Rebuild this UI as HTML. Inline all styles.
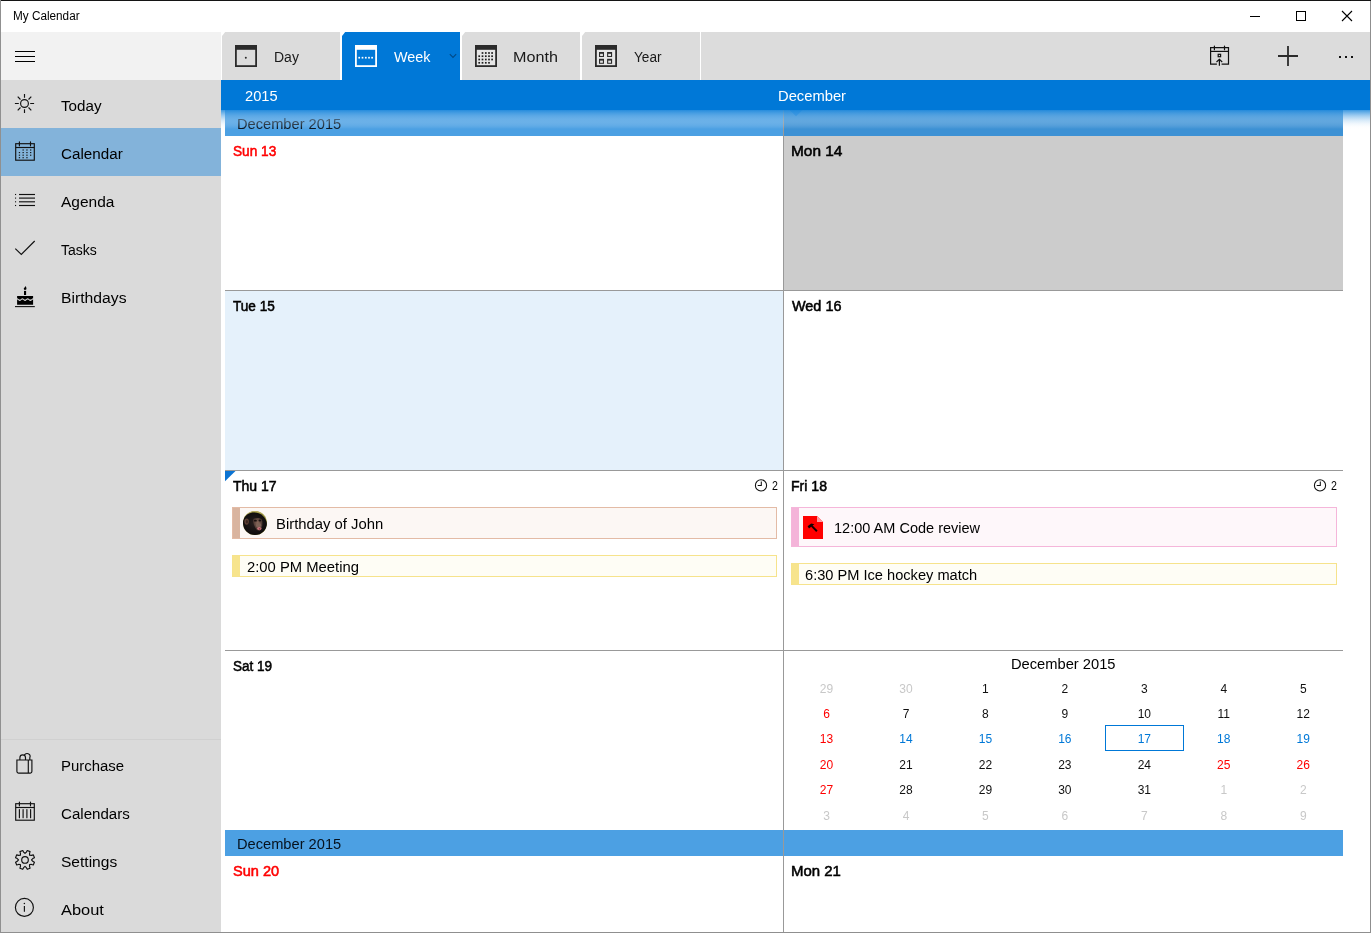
<!DOCTYPE html>
<html lang="en">
<head>
<meta charset="utf-8">
<title>My Calendar</title>
<style>
*{box-sizing:border-box;margin:0;padding:0}
html,body{width:1371px;height:933px;overflow:hidden;background:#fff}
body{font-family:"Liberation Sans",sans-serif;color:#000;position:relative}
.abs{position:absolute}
.t{position:absolute;white-space:nowrap;line-height:18px;transform-origin:0 0;display:block}
#win{position:absolute;left:0;top:0;width:1371px;height:933px;overflow:hidden;background:#fff;will-change:transform}
#bt{left:1px;top:0;width:1370px;height:1px;background:#141414;z-index:50}
#bl{left:0;top:0;width:1px;height:933px;background:#909090;z-index:50}
#br{left:1370px;top:1px;width:1px;height:932px;background:#8f8f8f;z-index:50}
#bb{left:0;top:932px;width:1371px;height:1px;background:#8f8f8f;z-index:50}
#sbhead{left:0;top:32px;width:221px;height:48px;background:#f2f2f2}
#sb{left:0;top:80px;width:221px;height:853px;background:#dadada}
.nav{position:absolute;left:0;width:221px;height:48px}
.nav.sel{background:#83b3da}
.nav svg{position:absolute;left:0;top:0;width:48px;height:48px;overflow:visible}
#sbsep{left:0;top:739px;width:221px;height:1px;background:#d0d0d0}
#tabbar{left:221px;top:32px;width:1150px;height:48px;background:#fff}
.tab{position:absolute;top:32px;width:118px;height:48px;background:#dcdcdc;clip-path:polygon(0 4px,3.2px 0,100% 0,100% 100%,0 100%)}
.tab.sel{background:#0078d7}
.tab svg.ic{position:absolute;left:12px;top:12px;width:24px;height:24px;overflow:visible}
#bluebar{left:221px;top:80px;width:1149px;height:30px;background:#0078d7}
.band{position:absolute;left:225px;width:1118px;height:26px;background:rgba(0,120,215,.7)}
.hl{position:absolute;left:225px;width:1118px;height:1px;background:#999}
.vl{position:absolute;left:783px;width:1px;background:#999}
.ev{position:absolute;border:1px solid;overflow:hidden}
.ev b{position:absolute;left:-1px;top:-1px;bottom:-1px;width:8px}
#mini i{position:absolute;width:79.45px;text-align:center;font-style:normal;font-size:12px;line-height:14px;color:#111}
#mini i.g{color:#c8c8c8}
#mini i.r{color:#f00}
#mini i.b{color:#0078d7}
</style>
</head>
<body>
<div id="win">
<div class="abs" id="bt"></div><div class="abs" id="bl"></div><div class="abs" id="br"></div><div class="abs" id="bb"></div>
<!-- title bar -->
<span class="t" style="left:13.40px;top:6.84px;font-size:12px;transform:scaleX(0.9790)">My Calendar</span>
<svg class="abs" style="left:1240px;top:0;width:131px;height:32px" viewBox="1240 0 131 32">
<path d="M1250 16.5H1260" stroke="#000" stroke-width="1" fill="none"/>
<rect x="1296.5" y="11.5" width="9" height="9" stroke="#000" stroke-width="1" fill="none"/>
<path d="M1342 11L1352 21M1352 11L1342 21" stroke="#000" stroke-width="1.1" fill="none"/>
</svg>
<!-- sidebar -->
<div class="abs" id="sbhead"></div>
<div class="abs" id="sb"></div>
<svg class="abs" style="left:0;top:32px;width:48px;height:48px" viewBox="0 0 48 48"><path d="M15 19.5H35M15 24.5H35M15 29.5H35" stroke="#000" stroke-width="1" fill="none"/></svg>
<div class="nav" style="top:80px"><svg viewBox="0 0 48 48"><circle cx="24.5" cy="23.5" r="3.9" stroke="#111" stroke-width="1.15" fill="none"/><path d="M24.50 17.80L24.50 13.90M28.53 19.47L31.29 16.71M30.20 23.50L34.10 23.50M28.53 27.53L31.29 30.29M24.50 29.20L24.50 33.10M20.47 27.53L17.71 30.29M18.80 23.50L14.90 23.50M20.47 19.47L17.71 16.71" stroke="#111" stroke-width="1.15" fill="none" stroke-width="1.25"/></svg></div>
<span class="t" style="left:61.00px;top:96.91px;font-size:14.7px;transform:scaleX(1.0339)">Today</span>
<div class="nav sel" style="top:128px"><svg viewBox="0 0 48 48"><rect x="15.7" y="15.7" width="18.6" height="16.5" stroke="#111" stroke-width="1.15" fill="none" stroke-width="1.25"/><path d="M15.7 19.5H34.3" stroke="#111" stroke-width="1.15" fill="none"/><path d="M19.4 13.9V17.8M30.5 13.9V17.8" stroke="#111" stroke-width="1.15" fill="none" stroke-width="1.3" stroke-linecap="round"/><rect x="22.5" y="21.45" width="1.3" height="1.1" fill="#111"/><rect x="26.3" y="21.45" width="1.3" height="1.1" fill="#111"/><rect x="30.0" y="21.45" width="1.3" height="1.1" fill="#111"/><rect x="18.8" y="24.05" width="1.3" height="1.1" fill="#111"/><rect x="22.5" y="24.05" width="1.3" height="1.1" fill="#111"/><rect x="26.3" y="24.05" width="1.3" height="1.1" fill="#111"/><rect x="30.0" y="24.05" width="1.3" height="1.1" fill="#111"/><rect x="18.8" y="26.65" width="1.3" height="1.1" fill="#111"/><rect x="22.5" y="26.65" width="1.3" height="1.1" fill="#111"/><rect x="26.3" y="26.65" width="1.3" height="1.1" fill="#111"/><rect x="30.0" y="26.65" width="1.3" height="1.1" fill="#111"/><rect x="18.8" y="29.15" width="1.3" height="1.1" fill="#111"/><rect x="22.5" y="29.15" width="1.3" height="1.1" fill="#111"/><rect x="26.3" y="29.15" width="1.3" height="1.1" fill="#111"/></svg></div>
<span class="t" style="left:61.40px;top:144.91px;font-size:14.7px;transform:scaleX(1.0350)">Calendar</span>
<div class="nav" style="top:176px"><svg viewBox="0 0 48 48"><path d="M19 18.5H35" stroke="#111" stroke-width="1.15" fill="none" stroke-width="1.1"/><rect x="15" y="17.95" width="1.1" height="1.1" fill="#111"/><path d="M19 22.1H35" stroke="#111" stroke-width="1.15" fill="none" stroke-width="1.1"/><rect x="15" y="21.55" width="1.1" height="1.1" fill="#111"/><path d="M19 25.8H35" stroke="#111" stroke-width="1.15" fill="none" stroke-width="1.1"/><rect x="15" y="25.25" width="1.1" height="1.1" fill="#111"/><path d="M19 29.5H35" stroke="#111" stroke-width="1.15" fill="none" stroke-width="1.1"/><rect x="15" y="28.95" width="1.1" height="1.1" fill="#111"/></svg></div>
<span class="t" style="left:60.90px;top:192.91px;font-size:14.7px;transform:scaleX(1.0550)">Agenda</span>
<div class="nav" style="top:224px"><svg viewBox="0 0 48 48"><path d="M15.3 24.6L21.3 30.4L34.7 17" stroke="#111" stroke-width="1.15" fill="none" stroke-width="1.25"/></svg></div>
<span class="t" style="left:61.30px;top:240.91px;font-size:14.7px;transform:scaleX(0.9543)">Tasks</span>
<div class="nav" style="top:272px"><svg viewBox="0 0 48 48"><path d="M15 34.6H34.8" stroke="#111" stroke-width="1.1" fill="none"/><path d="M17.1 24H33.1V26.2C32 26.2 31.6 27.6 30.4 27.6C29.2 27.6 28.9 26.2 27.7 26.2C26.5 26.2 26.2 27.6 25.1 27.6C23.9 27.6 23.6 26.2 22.4 26.2C21.2 26.2 20.9 27.6 19.8 27.6C18.6 27.6 18.3 26.2 17.1 26.2Z" fill="#000"/><path d="M17.1 27.6C18.3 27.6 18.6 29 19.8 29C20.9 29 21.2 27.6 22.4 27.6C23.6 27.6 23.9 29 25.1 29C26.2 29 26.5 27.6 27.7 27.6C28.9 27.6 29.2 29 30.4 29C31.6 29 32 27.6 33.1 27.6V32.8H17.1Z" fill="#000"/><rect x="24" y="18.9" width="2.1" height="4.1" fill="#000"/><path d="M25.7 13.9C26.3 15.4 26.6 16.2 26.4 17C26.2 17.7 25.7 17.9 25 17.9C24.2 17.9 23.7 17.4 23.8 16.6C23.9 15.7 25.2 15.1 25.7 13.9Z" fill="#000"/></svg></div>
<span class="t" style="left:60.63px;top:288.91px;font-size:14.7px;transform:scaleX(1.0705)">Birthdays</span>
<div class="nav" style="top:741px"><svg viewBox="0 0 48 48"><path d="M16.9 19H31.9V30.3A1.8 1.8 0 0 1 30.1 32.1H18.7A1.8 1.8 0 0 1 16.9 30.3Z" stroke="#111" stroke-width="1.15" fill="none"/><path d="M28.3 19V32.1" stroke="#111" stroke-width="1.15" fill="none"/><path d="M19.9 19V16.7A2.8 2.85 0 0 1 25.5 16.7V19M24.3 14.4A2.8 2.85 0 0 1 29.8 16.7V19" stroke="#111" stroke-width="1.15" fill="none"/></svg></div>
<span class="t" style="left:60.98px;top:756.91px;font-size:14.7px;transform:scaleX(1.0167)">Purchase</span>
<div class="nav" style="top:789px"><svg viewBox="0 0 48 48"><rect x="15.7" y="14.7" width="18.6" height="16.5" stroke="#111" stroke-width="1.15" fill="none" stroke-width="1.25"/><path d="M15.7 18.5H34.3" stroke="#111" stroke-width="1.15" fill="none"/><path d="M19.4 13V16.8M30.5 13V16.8" stroke="#111" stroke-width="1.15" fill="none" stroke-width="1.3" stroke-linecap="round"/><path d="M19.4 20.6V28.7M23.1 20.6V28.7M26.9 20.6V28.7M30.6 20.6V28.7" stroke="#111" stroke-width="1.15" fill="none" stroke-width="1.15" stroke-linecap="round"/></svg></div>
<span class="t" style="left:61.40px;top:804.91px;font-size:14.7px;transform:scaleX(1.0285)">Calendars</span>
<div class="nav" style="top:837px"><svg viewBox="0 0 48 48"><path d="M25.00 16.40 L26.37 15.12 L27.26 13.47 L30.07 14.63 L29.53 16.43 L29.60 18.30 L31.47 18.37 L33.27 17.83 L34.43 20.64 L32.78 21.53 L31.50 22.90 L32.78 24.27 L34.43 25.16 L33.27 27.97 L31.47 27.43 L29.60 27.50 L29.53 29.37 L30.07 31.17 L27.26 32.33 L26.37 30.68 L25.00 29.40 L23.63 30.68 L22.74 32.33 L19.93 31.17 L20.47 29.37 L20.40 27.50 L18.53 27.43 L16.73 27.97 L15.57 25.16 L17.22 24.27 L18.50 22.90 L17.22 21.53 L15.57 20.64 L16.73 17.83 L18.53 18.37 L20.40 18.30 L20.47 16.43 L19.93 14.63 L22.74 13.47 L23.63 15.12Z" stroke="#111" stroke-width="1.15" fill="none" stroke-linejoin="round"/><circle cx="25" cy="22.9" r="3.3" stroke="#111" stroke-width="1.15" fill="none"/></svg></div>
<span class="t" style="left:61.40px;top:852.91px;font-size:14.7px;transform:scaleX(1.0583)">Settings</span>
<div class="nav" style="top:885px"><svg viewBox="0 0 48 48"><circle cx="24.4" cy="22.4" r="9" stroke="#111" stroke-width="1.15" fill="none"/><path d="M24.4 20.9V26.8" stroke="#111" stroke-width="1.15" fill="none" stroke-width="1.2"/><circle cx="24.4" cy="18.4" r="0.75" fill="#111"/></svg></div>
<span class="t" style="left:61.40px;top:900.91px;font-size:14.7px;transform:scaleX(1.1174)">About</span>
<div class="abs" id="sbsep"></div>
<!-- tabs -->
<div class="abs" id="tabbar"></div>
<div class="tab" style="left:222px"><svg class="ic" viewBox="0 0 24 24"><rect x="1" y="1" width="22" height="22" fill="#2b2b2b"/><rect x="2.8" y="5.8" width="18.4" height="15.4" fill="#dcdcdc"/><circle cx="11.8" cy="13.7" r="1" fill="#2b2b2b"/></svg></div>
<span class="t" style="left:273.75px;top:47.91px;font-size:14.7px;transform:scaleX(0.9544);color:#1a1a1a">Day</span>
<div class="tab sel" style="left:342px"><svg class="ic" viewBox="0 0 24 24"><rect x="1" y="1" width="22" height="22" fill="#fff"/><rect x="2.8" y="5.8" width="18.4" height="15.4" fill="#0078d7"/><rect x="4.35" y="12.85" width="1.7" height="1.7" fill="#fff"/><rect x="7.65" y="12.85" width="1.7" height="1.7" fill="#fff"/><rect x="10.95" y="12.85" width="1.7" height="1.7" fill="#fff"/><rect x="14.15" y="12.85" width="1.7" height="1.7" fill="#fff"/><rect x="17.25" y="12.85" width="1.7" height="1.7" fill="#fff"/></svg><svg style="position:absolute;left:106px;top:21px;width:10px;height:6px" viewBox="0 0 10 6"><path d="M1.8 1.2L5 4.4L8.2 1.2" stroke="#004a87" stroke-width="1.1" fill="none"/></svg></div>
<span class="t" style="left:393.90px;top:47.91px;font-size:14.7px;transform:scaleX(0.9780);color:#fff">Week</span>
<div class="tab" style="left:462px"><svg class="ic" viewBox="0 0 24 24"><rect x="1" y="1" width="22" height="22" fill="#2b2b2b"/><rect x="2.8" y="5.8" width="18.4" height="15.4" fill="#e6e6e6"/><rect x="7.65" y="8.15" width="1.7" height="1.7" fill="#1e1e1e"/><rect x="10.95" y="8.15" width="1.7" height="1.7" fill="#1e1e1e"/><rect x="14.15" y="8.15" width="1.7" height="1.7" fill="#1e1e1e"/><rect x="17.25" y="8.15" width="1.7" height="1.7" fill="#1e1e1e"/><rect x="4.35" y="11.35" width="1.7" height="1.7" fill="#1e1e1e"/><rect x="7.65" y="11.35" width="1.7" height="1.7" fill="#1e1e1e"/><rect x="10.95" y="11.35" width="1.7" height="1.7" fill="#1e1e1e"/><rect x="14.15" y="11.35" width="1.7" height="1.7" fill="#1e1e1e"/><rect x="17.25" y="11.35" width="1.7" height="1.7" fill="#1e1e1e"/><rect x="4.35" y="14.65" width="1.7" height="1.7" fill="#1e1e1e"/><rect x="7.65" y="14.65" width="1.7" height="1.7" fill="#1e1e1e"/><rect x="10.95" y="14.65" width="1.7" height="1.7" fill="#1e1e1e"/><rect x="14.15" y="14.65" width="1.7" height="1.7" fill="#1e1e1e"/><rect x="17.25" y="14.65" width="1.7" height="1.7" fill="#1e1e1e"/><rect x="4.35" y="17.95" width="1.7" height="1.7" fill="#1e1e1e"/><rect x="7.65" y="17.95" width="1.7" height="1.7" fill="#1e1e1e"/><rect x="10.95" y="17.95" width="1.7" height="1.7" fill="#1e1e1e"/><rect x="14.15" y="17.95" width="1.7" height="1.7" fill="#1e1e1e"/></svg></div>
<span class="t" style="left:513.20px;top:47.91px;font-size:14.7px;transform:scaleX(1.0996);color:#1a1a1a">Month</span>
<div class="tab" style="left:582px"><svg class="ic" viewBox="0 0 24 24"><rect x="1" y="1" width="22" height="22" fill="#2b2b2b"/><rect x="2.8" y="5.8" width="18.4" height="15.4" fill="#e6e6e6"/><rect x="5.0" y="8.0" width="5" height="5" fill="#2b2b2b"/><rect x="6.1" y="9.8" width="2.8" height="2.2" fill="#e0e0e0"/><rect x="5.0" y="14.8" width="5" height="5" fill="#2b2b2b"/><rect x="6.1" y="16.6" width="2.8" height="2.2" fill="#e0e0e0"/><rect x="13.1" y="8.0" width="5" height="5" fill="#2b2b2b"/><rect x="14.2" y="9.8" width="2.8" height="2.2" fill="#e0e0e0"/><rect x="13.1" y="14.8" width="5" height="5" fill="#2b2b2b"/><rect x="14.2" y="16.6" width="2.8" height="2.2" fill="#e0e0e0"/></svg></div>
<span class="t" style="left:634.10px;top:47.91px;font-size:14.7px;transform:scaleX(0.9267);color:#1a1a1a">Year</span>
<div class="abs" style="left:701px;top:32px;width:669px;height:48px;background:#dcdcdc"></div>
<svg class="abs" style="left:1200px;top:36px;width:170px;height:40px" viewBox="1200 36 170 40">
<path d="M1216.9 64.2H1210.6V47.6H1228.5V64.2H1221.6" stroke="#111" stroke-width="1.2" fill="none" stroke-width="1.3"/>
<path d="M1210.6 51.4H1228.5" stroke="#111" stroke-width="1.2" fill="none"/>
<path d="M1214.4 46V49.7M1224.5 46V49.7" stroke="#111" stroke-width="1.2" fill="none" stroke-width="1.3" stroke-linecap="round"/>
<rect x="1218.2" y="54.3" width="2.4" height="2.4" stroke="#111" stroke-width="1.2" fill="none" stroke-width="1.1"/>
<path d="M1219.4 65.8V59.6M1216.5 62L1219.4 59.4L1222.2 62" stroke="#111" stroke-width="1.2" fill="none"/>
<path d="M1278 56H1298M1288 46V66" stroke="#2b2b2b" stroke-width="1.8" fill="none"/>
<rect x="1339" y="56" width="2" height="2" fill="#111"/><rect x="1345" y="56" width="2" height="2" fill="#111"/><rect x="1351" y="56" width="2" height="2" fill="#111"/>
</svg>
<!-- blue bar -->
<div class="abs" id="bluebar"></div>
<span class="t" style="left:244.80px;top:86.91px;font-size:14.7px;transform:scaleX(0.9998);color:#fff">2015</span>
<span class="t" style="left:777.80px;top:86.91px;font-size:14.7px;transform:scaleX(1.0036);color:#fff">December</span>
<!-- grid -->
<div class="abs" style="left:784px;top:110px;width:559px;height:180px;background:#ccc"></div>
<div class="abs" style="left:225px;top:291px;width:558px;height:179px;background:#e5f1fb"></div>
<div class="band" style="top:110px"></div>
<div class="band" style="top:830px"></div>
<span class="t" style="left:236.50px;top:114.91px;font-size:14.7px;transform:scaleX(0.9967);color:#06121e">December 2015</span>
<span class="t" style="left:236.50px;top:834.91px;font-size:14.7px;transform:scaleX(0.9967);color:#06121e">December 2015</span>
<div class="hl" style="top:290px"></div>
<div class="hl" style="top:470px"></div>
<div class="hl" style="top:650px"></div>
<div class="vl" style="top:110px;height:720px"></div>
<div class="vl" style="top:830px;height:103px"></div>
<span class="t" style="left:232.91px;top:141.91px;font-size:14.7px;transform:scaleX(0.9287);-webkit-text-stroke:0.55px #f00;color:#f00">Sun 13</span>
<span class="t" style="left:790.88px;top:141.91px;font-size:14.7px;transform:scaleX(1.0487);-webkit-text-stroke:0.55px #000">Mon 14</span>
<span class="t" style="left:232.61px;top:296.91px;font-size:14.7px;transform:scaleX(0.9259);-webkit-text-stroke:0.55px #000">Tue 15</span>
<span class="t" style="left:791.82px;top:296.91px;font-size:14.7px;transform:scaleX(0.9817);-webkit-text-stroke:0.55px #000">Wed 16</span>
<span class="t" style="left:233.01px;top:476.91px;font-size:14.7px;transform:scaleX(0.9542);-webkit-text-stroke:0.55px #000">Thu 17</span>
<span class="t" style="left:791.26px;top:476.91px;font-size:14.7px;transform:scaleX(0.9586);-webkit-text-stroke:0.55px #000">Fri 18</span>
<span class="t" style="left:233.11px;top:656.91px;font-size:14.7px;transform:scaleX(0.9216);-webkit-text-stroke:0.55px #000">Sat 19</span>
<span class="t" style="left:232.92px;top:861.91px;font-size:14.7px;transform:scaleX(0.9909);-webkit-text-stroke:0.55px #f00;color:#f00">Sun 20</span>
<span class="t" style="left:791.40px;top:861.91px;font-size:14.7px;transform:scaleX(1.0175);-webkit-text-stroke:0.55px #000">Mon 21</span>
<svg class="abs" style="left:225px;top:471px;width:11px;height:11px" viewBox="0 0 11 11"><path d="M0 0H10.5L0 10.3Z" fill="#0b73d2"/></svg>
<svg class="abs" style="left:753.3px;top:477px;width:16px;height:16px" viewBox="0 0 16 16"><circle cx="8" cy="8.4" r="5.6" stroke="#111" stroke-width="1.05" fill="none"/><path d="M8.3 4.6V8.4H4.7" stroke="#111" stroke-width="1.05" fill="none"/></svg>
<span class="t" style="left:771.90px;top:476.77px;font-size:12.2px;transform:scaleX(0.8714)">2</span>
<svg class="abs" style="left:1312.3px;top:477px;width:16px;height:16px" viewBox="0 0 16 16"><circle cx="8" cy="8.4" r="5.6" stroke="#111" stroke-width="1.05" fill="none"/><path d="M8.3 4.6V8.4H4.7" stroke="#111" stroke-width="1.05" fill="none"/></svg>
<span class="t" style="left:1330.90px;top:476.77px;font-size:12.2px;transform:scaleX(0.8714)">2</span>
<div class="ev" style="left:232px;top:507px;width:545px;height:32px;border-color:#e3bba6;background:#fcf7f4"><b style="background:#d9b49f"></b><svg style="position:absolute;left:10px;top:3px;width:24px;height:24px" viewBox="0 0 24 24"><defs><radialGradient id="av" cx="50%" cy="45%" r="62%"><stop offset="0" stop-color="#2a2120"/><stop offset="1" stop-color="#070606"/></radialGradient><radialGradient id="fc" cx="50%" cy="40%" r="60%"><stop offset="0" stop-color="#8a6a5c"/><stop offset="1" stop-color="#3a2a26"/></radialGradient><clipPath id="avc"><circle cx="12" cy="12" r="12"/></clipPath></defs><g clip-path="url(#avc)"><rect width="24" height="24" fill="#9a9440"/><path d="M0 0H24V6C20 2 15 1 10 1C5 2 2 5 0 9Z" fill="#b9ad62"/><path d="M19 20L24 17V24H16Z" fill="#8a8a3a"/><path d="M-1 14C-1 6 5 1.5 11 1.5C18 1.5 24.5 7 24 15C23.6 21 18 25 11 25C4 25 -1 21 -1 14Z" fill="url(#av)"/><ellipse cx="3.6" cy="10.6" rx="2.3" ry="3.1" fill="#5e4034"/><ellipse cx="3.9" cy="10.8" rx="1.1" ry="1.8" fill="#3a2620"/><path d="M10.2 8.2C11.5 6.6 17.6 6.4 18.8 8.6C19.8 11 19.6 15 18.6 18C17.8 20 14.6 20.4 13.4 18.6C11.6 16 9.4 11 10.2 8.2Z" fill="url(#fc)"/><ellipse cx="12.4" cy="9.7" rx="1.5" ry="0.9" fill="#1a1210"/><ellipse cx="16.9" cy="9.5" rx="1.4" ry="0.9" fill="#1a1210"/><ellipse cx="15.6" cy="14.2" rx="2.6" ry="2.3" fill="#7d6256"/><ellipse cx="16.3" cy="17.6" rx="2.1" ry="1.6" fill="#c9767c"/><ellipse cx="16.6" cy="17.9" rx="0.9" ry="0.7" fill="#7a2a34"/></g></svg></div>
<span class="t" style="left:275.89px;top:514.91px;font-size:14.7px;transform:scaleX(1.0107)">Birthday of John</span>
<div class="ev" style="left:232px;top:555px;width:545px;height:22px;border-color:#f6e38c;background:#fefdf5"><b style="background:#f7e48d"></b></div>
<span class="t" style="left:246.50px;top:557.91px;font-size:14.7px;transform:scaleX(1.0085)">2:00 PM Meeting</span>
<div class="ev" style="left:791px;top:507px;width:546px;height:40px;border-color:#f5b6da;background:#fef7fa"><b style="background:#f4b4d9"></b><svg style="position:absolute;left:11px;top:8px;width:20px;height:23px" viewBox="0 0 20 23"><path d="M0 0H14L20 6V23H0Z" fill="#f00"/><path d="M14 0V6H20Z" fill="#ff9aa0"/><path d="M4.6 10.2L8.2 7.4L11.4 8.2L9.6 9.6L14.6 14.6L13.2 16L8.2 10.8L6 12.4Z" fill="#140000"/></svg></div>
<span class="t" style="left:833.61px;top:518.91px;font-size:14.7px;transform:scaleX(0.9887)">12:00 AM Code review</span>
<div class="ev" style="left:791px;top:563px;width:546px;height:22px;border-color:#f6e38c;background:#fefdf5"><b style="background:#f7e48d"></b></div>
<span class="t" style="left:805.00px;top:565.91px;font-size:14.7px;transform:scaleX(0.9948)">6:30 PM Ice hockey match</span>
<!-- mini calendar -->
<span class="t" style="left:1010.70px;top:654.91px;font-size:14.7px;transform:scaleX(0.9996)">December 2015</span>
<div class="abs" id="mini" style="left:786px;top:651px;width:557px;height:179px"><i class="g" style="left:0.80px;top:30.84px">29</i><i class="g" style="left:80.25px;top:30.84px">30</i><i style="left:159.70px;top:30.84px">1</i><i style="left:239.15px;top:30.84px">2</i><i style="left:318.60px;top:30.84px">3</i><i style="left:398.05px;top:30.84px">4</i><i style="left:477.50px;top:30.84px">5</i><i class="r" style="left:0.80px;top:55.84px">6</i><i style="left:80.25px;top:55.84px">7</i><i style="left:159.70px;top:55.84px">8</i><i style="left:239.15px;top:55.84px">9</i><i style="left:318.60px;top:55.84px">10</i><i style="left:398.05px;top:55.84px">11</i><i style="left:477.50px;top:55.84px">12</i><i class="r" style="left:0.80px;top:80.84px">13</i><i class="b" style="left:80.25px;top:80.84px">14</i><i class="b" style="left:159.70px;top:80.84px">15</i><i class="b" style="left:239.15px;top:80.84px">16</i><i class="b" style="left:318.60px;top:80.84px">17</i><i class="b" style="left:398.05px;top:80.84px">18</i><i class="b" style="left:477.50px;top:80.84px">19</i><i class="r" style="left:0.80px;top:106.84px">20</i><i style="left:80.25px;top:106.84px">21</i><i style="left:159.70px;top:106.84px">22</i><i style="left:239.15px;top:106.84px">23</i><i style="left:318.60px;top:106.84px">24</i><i class="r" style="left:398.05px;top:106.84px">25</i><i class="r" style="left:477.50px;top:106.84px">26</i><i class="r" style="left:0.80px;top:131.84px">27</i><i style="left:80.25px;top:131.84px">28</i><i style="left:159.70px;top:131.84px">29</i><i style="left:239.15px;top:131.84px">30</i><i style="left:318.60px;top:131.84px">31</i><i class="g" style="left:398.05px;top:131.84px">1</i><i class="g" style="left:477.50px;top:131.84px">2</i><i class="g" style="left:0.80px;top:157.84px">3</i><i class="g" style="left:80.25px;top:157.84px">4</i><i class="g" style="left:159.70px;top:157.84px">5</i><i class="g" style="left:239.15px;top:157.84px">6</i><i class="g" style="left:318.60px;top:157.84px">7</i><i class="g" style="left:398.05px;top:157.84px">8</i><i class="g" style="left:477.50px;top:157.84px">9</i><div style="position:absolute;left:319px;top:74px;width:79px;height:26px;border:1px solid #0078d7"></div></div>
<svg class="abs" style="left:789px;top:109px;width:14px;height:8px" viewBox="0 0 14 8"><path d="M0.6 1H13.4L7 7.2Z" fill="#0078d7"/></svg>
<div class="abs" style="left:221px;top:110px;width:1149px;height:19px;background:linear-gradient(to bottom,rgba(32,137,220,0.873) 0.0%,rgba(48,146,223,0.811) 7.1%,rgba(64,154,225,0.748) 14.3%,rgba(80,162,228,0.686) 21.4%,rgba(96,171,230,0.624) 28.6%,rgba(112,179,233,0.561) 35.7%,rgba(128,188,235,0.499) 42.9%,rgba(144,196,238,0.437) 50.0%,rgba(160,204,240,0.374) 57.1%,rgba(175,213,243,0.312) 64.3%,rgba(191,221,245,0.249) 71.4%,rgba(207,230,248,0.187) 78.6%,rgba(223,238,250,0.125) 85.7%,rgba(239,247,253,0.062) 92.9%,rgba(255,255,255,0.000) 100.0%)"></div>
</div>
</body>
</html>
